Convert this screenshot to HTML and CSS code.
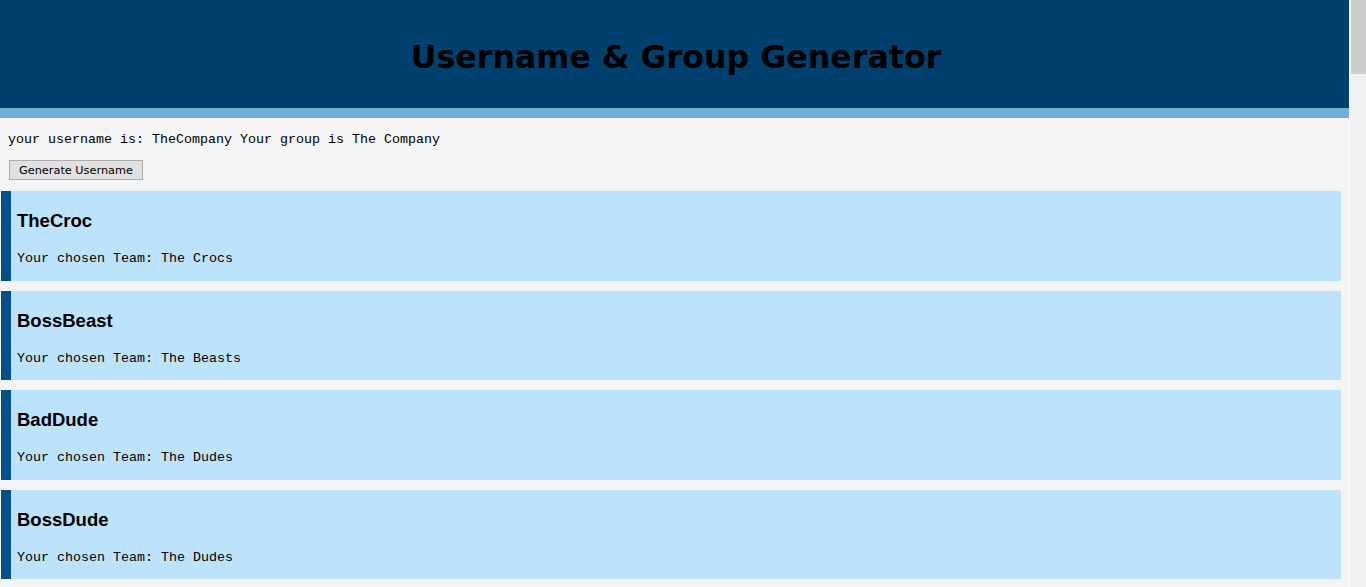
FILE: index.html
```html
<!DOCTYPE html>
<html lang="en">
<head>
<meta charset="utf-8">
<title>Username &amp; Group Generator</title>
<link rel="stylesheet" href="styles.css">
</head>
<body>
<div class="page">
  <header class="banner">
    <h1 class="banner-title">Username &amp; Group Generator</h1>
  </header>
  <main class="content">
    <p class="result">your username is: TheCompany Your group is The Company</p>
    <button class="gen-btn" type="button">Generate Username</button>
    <div class="cards">
      <section class="card">
        <h3 class="card-title">TheCroc</h3>
        <p class="card-text">Your chosen Team: The Crocs</p>
      </section>
      <section class="card">
        <h3 class="card-title">BossBeast</h3>
        <p class="card-text">Your chosen Team: The Beasts</p>
      </section>
      <section class="card">
        <h3 class="card-title">BadDude</h3>
        <p class="card-text">Your chosen Team: The Dudes</p>
      </section>
      <section class="card">
        <h3 class="card-title">BossDude</h3>
        <p class="card-text">Your chosen Team: The Dudes</p>
      </section>
    </div>
  </main>
</div>
<div class="scrollbar" aria-hidden="true"><div class="scroll-thumb"></div></div>
</body>
</html>
```

FILE: styles.css
```css
html, body {
  margin: 0;
  padding: 0;
}
body {
  background: #f4f4f4;
  color: #000;
  overflow: hidden;
}
.page {
  margin-right: 17px;
}
.banner {
  background: #00406e;
  height: 108px;
  border-bottom: 10px solid #72aed3;
  display: flex;
  align-items: center;
  justify-content: center;
}
.banner-title {
  margin: 0;
  font-family: "DejaVu Sans", Verdana, sans-serif;
  font-weight: bold;
  font-size: 31.7px;
  color: #000;
  padding-top: 6px;
  padding-left: 3px;
}
.content {
  padding: 0 8px 0 1px;
}
.result {
  margin: 14px 0 0 7px;
  font-family: "Liberation Mono", "Courier New", monospace;
  font-size: 13.33px;
  line-height: 15px;
}
.gen-btn {
  margin: 13px 0 0 8px;
  display: block;
  height: 20px;
  padding: 0 9px;
  font-family: "DejaVu Sans", Tahoma, sans-serif;
  font-size: 11.3px;
  background: #e1e1e1;
  border: 1px solid #adadad;
  border-radius: 0;
  color: #000;
}
.cards {
  margin-top: 11px;
  display: flex;
  flex-direction: column;
  gap: 10px;
}
.card {
  background: #bce3fa;
  border-left: 10px solid #00508a;
  padding: 19px 6px 13.5px;
}
.card-title {
  margin: 0 0 19px;
  font-family: "Liberation Sans", Arial, sans-serif;
  font-weight: bold;
  font-size: 18.5px;
  line-height: 22px;
}
.card-text {
  margin: 0;
  font-family: "Liberation Mono", "Courier New", monospace;
  font-size: 13.33px;
  line-height: 16px;
}
.scrollbar {
  position: fixed;
  top: 0;
  right: 0;
  bottom: 0;
  width: 16px;
  background: #f0f0f0;
  border-left: 1px solid #fafafa;
}
.scroll-thumb {
  margin-left: 1px;
  width: 15px;
  height: 74px;
  background: #cdcdcd;
}
```
